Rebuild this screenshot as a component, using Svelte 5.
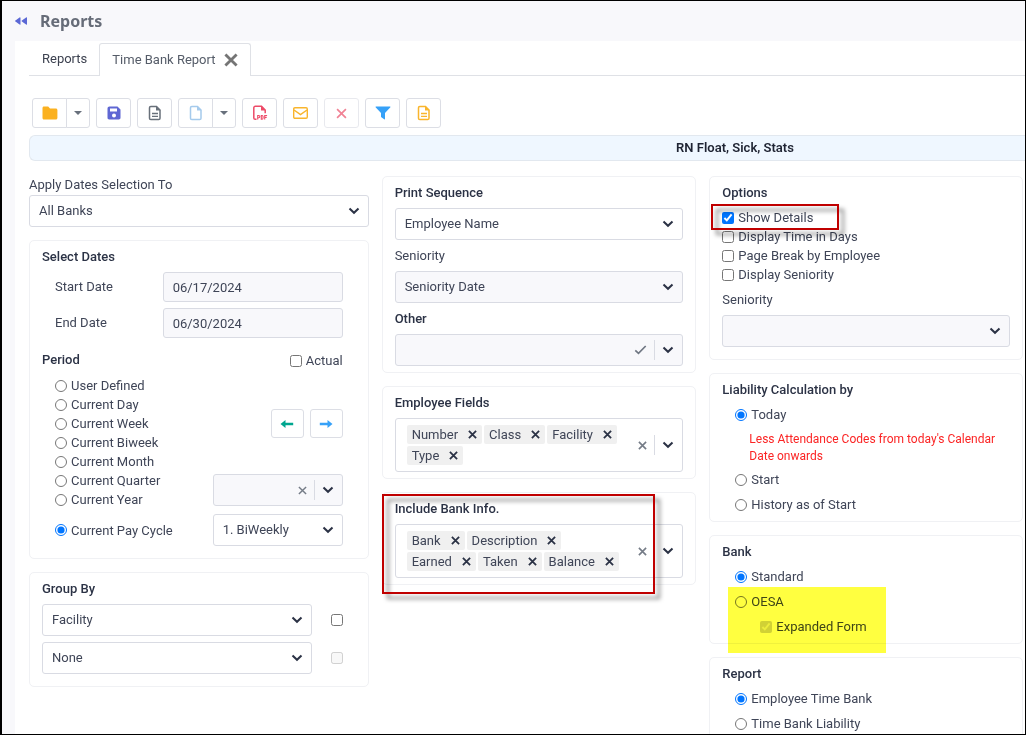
<script>
  const periods = ['User Defined', 'Current Day', 'Current Week', 'Current Biweek', 'Current Month', 'Current Quarter', 'Current Year'];
  const options = ['Show Details', 'Display Time in Days', 'Page Break by Employee', 'Display Seniority'];
  let shown = $state(['Show Details']);
  let period = $state('Current Pay Cycle');
  let liability = $state('Today');
  let bank = $state('Standard');
  let report = $state('Employee Time Bank');
  let fields = $state(['Number', 'Class', 'Facility', 'Type']);
  let bankInfo = $state(['Bank', 'Description', 'Earned', 'Taken', 'Balance']);
</script>

{#snippet chevron()}
  <svg class="chevron" width="12" height="8" viewBox="0 0 12 8" aria-hidden="true"><path d="M1.500 1.500 6 5.800l4.500-4.300" fill="none" stroke="#2b3245" stroke-width="2" /></svg>
{/snippet}

{#snippet cross(size, color, width)}
  <svg width={size} height={size} viewBox="0 0 10 10" aria-hidden="true"><path d="M1 1l8 8M9 1L1 9" fill="none" stroke={color} stroke-width={width} /></svg>
{/snippet}

{#snippet caret()}
  <svg width="8" height="4" viewBox="0 0 8 4" aria-hidden="true"><path d="M0 0h8L4 4z" fill="#68707c" /></svg>
{/snippet}

{#snippet page(color, lines)}
  <svg width="14" height="16" viewBox="0 0 14 16" aria-hidden="true">
    <path d="M2.800 1.500h5.700l3.500 3.500v8.200c0 .8-.5 1.300-1.300 1.300H2.800c-.8 0-1.300-.5-1.300-1.300V2.800c0-.8.5-1.300 1.300-1.300z" fill="none" stroke={color} stroke-width="1.500" />
    <path d="M8 1v4.500h4.500z" fill={color} />
    {#if lines}<path d="M4 8.500h6M4 11.300h6" stroke={color} stroke-width="1.300" />{/if}
  </svg>
{/snippet}

{#snippet select(id, text, off)}
  <div class="select">
    <select {id} disabled={off}><option>{text}</option></select>
    {@render chevron()}
  </div>
{/snippet}

{#snippet chips(label, items, clear)}
  <div class="multi" role="group" aria-label={label}>
    <div class="chips">
      {#each items as item}
        <span class="chip">{item}<button class="bare" aria-label={'Remove ' + item} onclick={() => items.splice(items.indexOf(item), 1)}>{@render cross(9, '#2b3245', 2)}</button></span>
      {/each}
    </div>
    <button class="bare clear" aria-label="Clear" onclick={clear}>{@render cross(9, '#757c87', 1.8)}</button>
    <i class="sep"></i>
    <button class="bare" aria-label="Open list">{@render chevron()}</button>
  </div>
{/snippet}

<div class="page">
  <header>
    <button class="bare" aria-label="Collapse menu"><svg width="12" height="8" viewBox="0 0 12 8"><path d="M5.500 .8v6.400c0 .5-.5.700-.9.400L.4 4.500a.6.6 0 0 1 0-1L4.600.4c.4-.3.9-.1.9.4zM12 .8v6.400c0 .5-.5.700-.9.400L6.900 4.500a.6.6 0 0 1 0-1L11.100.4c.4-.3.9-.1.9.4z" fill="#5b68d5" /></svg></button>
    <h1>Reports</h1>
  </header>
  <main>
    <nav>
      <a class="tab" href="#reports">Reports</a>
      <div class="tab active"><a href="#time-bank">Time Bank Report</a><button class="bare" aria-label="Close tab">{@render cross(14, '#757575', 2)}</button></div>
    </nav>

    <div class="toolbar">
      <div class="split">
        <button aria-label="Open"><svg width="16" height="14" viewBox="0 0 16 14"><path d="M2 .5h4.200l1.800 2h5.800c.9 0 1.600.6 1.600 1.500v8c0 .9-.7 1.500-1.600 1.500H2c-.9 0-1.500-.6-1.500-1.500V2C.500 1.100 1.100.5 2 .5z" fill="#fbb120" /></svg></button>
        <button class="more" aria-label="Open options">{@render caret()}</button>
      </div>
      <button aria-label="Save"><svg width="14" height="14" viewBox="0 0 14 14"><path d="M2.500.5h8l3 3v8.300c0 1-.7 1.700-1.700 1.700H2.200c-1 0-1.700-.7-1.700-1.700V2.500c0-1.200.8-2 2-2zM3 2.600v3h7v-3zM7 7.600a2 2 0 1 0 0 4 2 2 0 0 0 0-4z" fill="#5f67d3" fill-rule="evenodd" /></svg></button>
      <button aria-label="Report">{@render page('#68707a', true)}</button>
      <div class="split">
        <button aria-label="New">{@render page('#a5caec', false)}</button>
        <button class="more" aria-label="New options">{@render caret()}</button>
      </div>
      <button aria-label="Export PDF">
        <svg width="16" height="16" viewBox="0 0 16 16"><path d="M4.500 14.300H3.300c-.9 0-1.500-.5-1.500-1.400V2.700c0-.8.600-1.400 1.500-1.400h6.200l3.700 3.700v3.200" fill="none" stroke="#ed4b68" stroke-width="1.500" /><path d="M9 .8v4.700h4.700z" fill="#ed4b68" /><path d="M5.700 14.500v-4h1.100q1 0 1 1.100t-1 1.100H5.700M9.300 10.500v3.800h.8q1 0 1-1.900t-1-1.900zM12.700 14.500v-4h2.400M12.700 12.400h2" fill="none" stroke="#ed4b68" stroke-width="1.100" /></svg>
      </button>
      <button aria-label="Email"><svg width="15" height="12" viewBox="0 0 15 12"><rect x=".7" y=".7" width="13.600" height="10.600" rx="1.200" fill="none" stroke="#f9b52d" stroke-width="1.400" /><path d="M1 3l6.500 4.500L14 3" fill="none" stroke="#f9b52d" stroke-width="1.500" /></svg></button>
      <button class="faded" aria-label="Delete">{@render cross(11, '#ea405d', 1.5)}</button>
      <button aria-label="Filter"><svg width="16" height="14" viewBox="0 0 16 14"><path d="M1.200.5h13.600c.6 0 .8.6.4 1L10 7v5.900c0 .5-.4.700-.8.4L6.300 11.300 6 10.800V7L.8 1.500C.400 1.100.6.5 1.200.5z" fill="#36a1f8" /></svg></button>
      <button aria-label="Document">{@render page('#f9b52d', true)}</button>
    </div>

    <div class="banner">RN Float, Sick, Stats</div>

    <div class="columns">
      <div class="column">
        <div>
          <label class="apply" for="apply">Apply Dates Selection To</label>
          {@render select('apply', 'All Banks', false)}
        </div>
        <section class="dates">
          <h2>Select Dates</h2>
          <div class="date"><label for="start">Start Date</label><input id="start" type="text" value="06/17/2024" readonly /></div>
          <div class="date"><label for="end">End Date</label><input id="end" type="text" value="06/30/2024" readonly /></div>
          <div class="period-head"><h2>Period</h2><label class="check"><input type="checkbox" />Actual</label></div>
          <div class="period">
            <div>
              {#each periods as p}
                <label class="check"><input type="radio" name="period" value={p} bind:group={period} />{p}</label>
              {/each}
            </div>
            <div class="period-side">
              <div class="arrows">
                <button aria-label="Previous"><svg width="14" height="10" viewBox="0 0 14 10"><path d="M.5 5l5-4v2.700h7.700v2.600H5.500V9z" fill="#00a68f" /></svg></button>
                <button aria-label="Next"><svg width="14" height="10" viewBox="0 0 14 10"><path d="M13.500 5l-5-4v2.700H.8v2.600h7.700V9z" fill="#36a1f8" /></svg></button>
              </div>
              <div class="multi off">
                <button class="bare clear" aria-label="Clear">{@render cross(9, '#757c87', 1.6)}</button>
                <i class="sep"></i>
                <button class="bare" aria-label="Open list">{@render chevron()}</button>
              </div>
            </div>
          </div>
          <div class="cycle">
            <label class="check"><input type="radio" name="period" value="Current Pay Cycle" bind:group={period} />Current Pay Cycle</label>
            <div class="cycle-select">{@render select('cycle', '1. BiWeekly', false)}</div>
          </div>
        </section>
        <section class="dates">
          <h2>Group By</h2>
          <div class="group">{@render select('group1', 'Facility', false)}<input type="checkbox" aria-label="Group by first" /></div>
          <div class="group">{@render select('group2', 'None', false)}<input type="checkbox" aria-label="Group by second" disabled /></div>
        </section>
      </div>

      <div class="column">
        <section class="fields">
          <h2><label for="print">Print Sequence</label></h2>
          {@render select('print', 'Employee Name', false)}
          <label class="caption" for="seniority">Seniority</label>
          {@render select('seniority', 'Seniority Date', true)}
          <h2 class="caption">Other</h2>
          <div class="multi off">
            <button class="bare clear" aria-label="Select all"><svg width="13" height="10" viewBox="0 0 13 10"><path d="M1.300 5.300l3.200 3L11.700 1" fill="none" stroke="#6f7682" stroke-width="1.700" /></svg></button>
            <i class="sep"></i>
            <button class="bare" aria-label="Open list">{@render chevron()}</button>
          </div>
        </section>
        <section class="fields">
          <h2>Employee Fields</h2>
          {@render chips('Employee Fields', fields, () => (fields = []))}
        </section>
        <section class="fields">
          <h2>Include Bank Info.</h2>
          {@render chips('Include Bank Info.', bankInfo, () => (bankInfo = []))}
          <div class="callout info-callout"></div>
        </section>
      </div>

      <div class="column">
        <section class="options">
          <h2>Options</h2>
          {#each options as o}
            <label class="check"><input type="checkbox" value={o} bind:group={shown} />{o}</label>
          {/each}
          <label class="caption" for="opt-seniority">Seniority</label>
          {@render select('opt-seniority', '', true)}
          <div class="callout options-callout"></div>
        </section>
        <section class="choices">
          <h2>Liability Calculation by</h2>
          <label class="check"><input type="radio" name="liability" value="Today" bind:group={liability} />Today</label>
          <p>Less Attendance Codes from today's Calendar Date onwards</p>
          <label class="check"><input type="radio" name="liability" value="Start" bind:group={liability} />Start</label>
          <label class="check"><input type="radio" name="liability" value="History" bind:group={liability} />History as of Start</label>
        </section>
        <section class="choices">
          <h2>Bank</h2>
          <label class="check"><input type="radio" name="bank" value="Standard" bind:group={bank} />Standard</label>
          <label class="check"><input type="radio" name="bank" value="OESA" bind:group={bank} />OESA</label>
          <label class="check nested"><input type="checkbox" checked disabled />Expanded Form</label>
          <div class="highlight"></div>
        </section>
        <section class="choices">
          <h2>Report</h2>
          <label class="check"><input type="radio" name="report" value="Employee Time Bank" bind:group={report} />Employee Time Bank</label>
          <label class="check"><input type="radio" name="report" value="Time Bank Liability" bind:group={report} />Time Bank Liability</label>
        </section>
      </div>
    </div>
  </main>
</div>

<style>
  :global(body) { margin: 0; }
  .page, .page * { box-sizing: border-box; }
  .page {
    height: 100vh;
    overflow: hidden;
    display: flex;
    flex-direction: column;
    border: 1px solid #000;
    border-left-width: 2px;
    background: #f8f8fb;
    color: #3f4557;
    font: 13px/18px Roboto, sans-serif;
  }
  header { display: flex; align-items: center; gap: 13px; height: 40px; flex: none; padding-left: 13px; }
  h1 { margin: 0; font: 700 16px/24px "Noto Sans", sans-serif; color: #666c78; }
  h2 { margin: 0 0 6px; font-size: 13px; line-height: 18px; font-weight: 500; color: #2b3245; }
  main { flex: 1; min-height: 0; margin-left: 13px; padding: 2px 0 0 14px; background: #fff; }
  svg { display: block; flex: none; }
  button { display: flex; align-items: center; justify-content: center; background: #fff; border: 1px solid #dcdee5; border-radius: 3px; padding: 0; margin: 0; }
  .bare { border: 0; background: none; flex: none; }
  input[type='checkbox'], input[type='radio'] { margin: 0; width: 12px; height: 12px; flex: none; }

  nav { display: flex; height: 33px; border-bottom: 1px solid #dfe1e6; }
  .tab { display: flex; align-items: center; padding: 0 12px 0 13px; color: #3d4250; text-decoration: none; }
  .active { height: 33px; gap: 8px; background: #fff; border: 1px solid #dfe1e6; border-bottom: 0; border-radius: 3px 3px 0 0; padding: 0 12px; }
  .active a { color: #555c68; text-decoration: none; }

  .toolbar { display: flex; gap: 6px; padding: 22px 3px 7px; }
  .toolbar button { width: 35px; height: 30px; }
  .split { display: flex; width: 58px; }
  .split button:first-child { border-radius: 3px 0 0 3px; }
  .split .more { width: 24px; margin-left: -1px; border-radius: 0 3px 3px 0; }
  .faded { opacity: 0.65; }
  .banner {
    height: 26px;
    line-height: 24px;
    padding-left: 415px;
    text-align: center;
    font-weight: 600;
    color: #1f2433;
    background: #eff7ff;
    border: 1px solid #e2e8ef;
    border-right: 0;
    border-radius: 6px 0 0 6px;
  }

  .columns { display: grid; grid-template-columns: 340fr 315fr 314fr; gap: 13px; padding: 15px 2px 0 0; align-items: start; }
  .column { display: flex; flex-direction: column; gap: 13px; min-width: 0; }
  section { position: relative; border: 1px solid #f0f1f4; border-radius: 5px; padding: 7px 12px 12px; }
  .dates { padding-right: 25px; }
  .fields { padding-bottom: 6px; }
  .choices { padding-bottom: 4px; }

  .select { position: relative; flex: 1; }
  .select .chevron { position: absolute; right: 9px; top: 12px; pointer-events: none; }
  select, input[type='text'] { width: 100%; height: 32px; border: 1px solid #d9dbe3; border-radius: 3px; background: #fff; padding: 0 10px 0 9px; font: inherit; color: inherit; margin: 0; }
  select { appearance: none; display: block; }
  select:disabled { background: #f8f8fb; opacity: 1; }
  input[type='text'] { flex: none; width: 180px; height: 30px; background: #f8f8fb; }

  .apply { display: block; margin-bottom: 1px; }
  .date { display: flex; align-items: center; justify-content: space-between; padding-left: 13px; margin-bottom: 6px; }
  .check { display: flex; align-items: center; gap: 4px; line-height: 19px; }
  .period-head { display: flex; align-items: flex-start; justify-content: space-between; margin-top: 13px; }
  .period-head h2 { margin-bottom: 7px; }
  .period { display: flex; justify-content: space-between; padding-left: 13px; }
  .period-side { width: 130px; padding-top: 33px; }
  .arrows { display: flex; justify-content: flex-end; gap: 6px; margin-bottom: 36px; }
  .arrows button { width: 33px; height: 29px; }
  .cycle { display: flex; align-items: center; justify-content: space-between; padding-left: 13px; margin-top: 5px; }
  .cycle-select { width: 130px; }
  .group { display: flex; align-items: center; gap: 19px; }
  .group + .group { margin-top: 6px; }
  .caption { display: block; margin: 7px 0 6px; }

  .multi { display: flex; align-items: center; justify-content: flex-end; gap: 7px; min-height: 32px; border: 1px solid #d9dbe3; border-radius: 3px; padding-right: 8px; background: #fff; }
  .off { background: #f8f8fb; }
  .sep { width: 1px; height: 20px; background: #d9dbe3; }
  .chips { flex: 1; display: flex; flex-wrap: wrap; gap: 2px; padding: 6px 3px 6px 11px; }
  .chip { display: flex; align-items: center; gap: 10px; height: 19px; padding: 0 5px; border-radius: 2px; background: #f0f0f0; }

  .choices h2 { margin-bottom: 3px; }
  .choices .check { line-height: 25px; padding-left: 13px; }
  .choices .nested { padding-left: 38px; }
  p { margin: 4px 8px 2px 27px; font-size: 12px; line-height: 17px; color: #fb2424; }

  .callout { position: absolute; border: 2px solid #c00000; filter: drop-shadow(5px 5px 2px rgba(0, 0, 0, 0.5)); pointer-events: none; }
  .info-callout { left: -1px; top: 1px; right: 40px; height: 100px; }
  .options-callout { left: 1px; top: 27px; width: 128px; height: 26px; }
  .highlight { position: absolute; left: 18px; top: 51px; width: 158px; height: 66px; background: #ffff40; mix-blend-mode: multiply; pointer-events: none; }
</style>
